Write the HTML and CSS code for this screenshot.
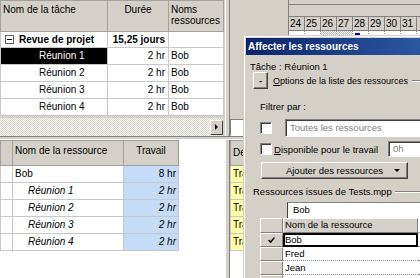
FILE: index.html
```html
<!DOCTYPE html>
<html lang="fr">

<head>
    <meta charset="UTF-8">
    <meta name="viewport" content="width=device-width, initial-scale=1.0">
    <title>Affecter les ressources</title>
    <link rel="stylesheet" href="styles.css">
</head>

<body>
    <div class="app">
        <!--volet du haut : tâches + gantt-->
        <div class="pane pane-top">
            <div class="sheet sheet-top">
                <table class="grid tasks">
                    <colgroup>
                        <col class="c-name">
                        <col class="c-dur">
                        <col class="c-res">
                    </colgroup>
                    <thead>
                        <tr>
                            <th>Nom de la tâche</th>
                            <th class="center">Durée</th>
                            <th>Noms<br>ressources</th>
                        </tr>
                    </thead>
                    <tbody>
                        <tr class="summary">
                            <td><span class="toggle"></span>Revue de projet</td>
                            <td class="num">15,25 jours</td>
                            <td></td>
                        </tr>
                        <tr class="sel">
                            <td class="task">Réunion 1</td>
                            <td class="num">2 hr</td>
                            <td>Bob</td>
                        </tr>
                        <tr>
                            <td class="task">Réunion 2</td>
                            <td class="num">2 hr</td>
                            <td>Bob</td>
                        </tr>
                        <tr>
                            <td class="task">Réunion 3</td>
                            <td class="num">2 hr</td>
                            <td>Bob</td>
                        </tr>
                        <tr>
                            <td class="task">Réunion 4</td>
                            <td class="num">2 hr</td>
                            <td>Bob</td>
                        </tr>
                    </tbody>
                </table>
                <div class="hscroll"><span class="scroll-btn"></span></div>
            </div>
            <div class="vsplit"></div>
            <div class="gantt">
                <div class="gantt-side"><span class="corner-box"></span></div>
                <div class="timescale">
                    <div class="tier tier-0"></div>
                    <div class="tier tier-1"></div>
                    <div class="days">
                        <span>24</span><span>25</span><span>26</span><span>27</span><span>28</span><span>29</span><span>30</span><span>31</span><span></span>
                    </div>
                    <div class="chart">
                        <span></span><span></span><span class="weekend"></span><span class="weekend"></span><span><i class="bar"></i></span><span></span><span></span><span></span><span></span>
                    </div>
                </div>
            </div>
        </div>
        <div class="hsplit"></div>
        <!--volet du bas : utilisation des ressources-->
        <div class="pane pane-bottom">
            <div class="sheet sheet-bottom">
                <table class="grid usage">
                    <colgroup>
                        <col class="c-id">
                        <col class="c-res-name">
                        <col class="c-work">
                    </colgroup>
                    <thead>
                        <tr>
                            <th></th>
                            <th>Nom de la ressource</th>
                            <th class="center">Travail</th>
                        </tr>
                    </thead>
                    <tbody>
                        <tr>
                            <td></td>
                            <td>Bob</td>
                            <td class="work">8 hr</td>
                        </tr>
                        <tr class="assign">
                            <td></td>
                            <td class="sub">Réunion 1</td>
                            <td class="work">2 hr</td>
                        </tr>
                        <tr class="assign">
                            <td></td>
                            <td class="sub">Réunion 2</td>
                            <td class="work">2 hr</td>
                        </tr>
                        <tr class="assign">
                            <td></td>
                            <td class="sub">Réunion 3</td>
                            <td class="work">2 hr</td>
                        </tr>
                        <tr class="assign">
                            <td></td>
                            <td class="sub">Réunion 4</td>
                            <td class="work">2 hr</td>
                        </tr>
                    </tbody>
                </table>
            </div>
            <div class="vsplit"></div>
            <div class="details">
                <table class="grid detail-grid">
                    <colgroup>
                        <col class="c-detail">
                        <col class="c-day">
                        <col class="c-day">
                    </colgroup>
                    <thead>
                        <tr><th>Détails</th><th></th><th></th></tr>
                    </thead>
                    <tbody>
                        <tr><td class="kind">Travail</td><td></td><td></td></tr>
                        <tr><td class="kind">Travail</td><td></td><td></td></tr>
                        <tr><td class="kind">Travail</td><td></td><td></td></tr>
                        <tr><td class="kind">Travail</td><td></td><td></td></tr>
                        <tr><td class="kind">Travail</td><td></td><td></td></tr>
                    </tbody>
                </table>
            </div>
        </div>

        <!--boîte de dialogue-->
        <div class="dialog">
            <div class="titlebar">Affecter les ressources</div>
            <div class="dlg-body">
                <p class="task-line">Tâche : Réunion 1</p>
                <div class="options">
                    <button class="mini">-</button>
                    <span class="options-label"><u>O</u>ptions de la liste des ressources</span>
                    <span class="rule"></span>
                </div>
                <p class="filter-label">Filtrer par :</p>
                <div class="check-row filter-row">
                    <span class="check"></span>
                    <span class="field">Toutes les ressources</span>
                </div>
                <div class="check-row avail-row">
                    <span class="check"></span>
                    <span class="check-label"><u>D</u>isponible pour le travail</span>
                    <span class="field field-small">0h</span>
                </div>
                <button class="add-btn"><span></span><span>Ajouter des ressources</span><span class="caret"></span></button>
                <div class="group">
                    <span>Ressources issues de Tests.mpp</span>
                    <span class="rule"></span>
                </div>
                <div class="editbar">
                    <span class="stub"></span>
                    <span class="edit">Bob</span>
                </div>
                <div class="res-grid">
                    <div class="res-row res-head">
                        <span class="sel-cell"></span>
                        <span class="name">Nom de la ressource</span>
                        <span class="more"></span>
                    </div>
                    <div class="res-row current">
                        <span class="sel-cell">
                            <svg width="7" height="6" viewBox="0 0 7 6"><polyline points="0.6,3 2.6,5.2 6.4,0.6" fill="none" stroke="#000" stroke-width="1.5"/></svg>
                        </span>
                        <span class="name">Bob</span>
                        <span class="more"></span>
                    </div>
                    <div class="res-row">
                        <span class="sel-cell"></span>
                        <span class="name">Fred</span>
                        <span class="more"></span>
                    </div>
                    <div class="res-row">
                        <span class="sel-cell"></span>
                        <span class="name">Jean</span>
                        <span class="more"></span>
                    </div>
                    <div class="res-row">
                        <span class="sel-cell"></span>
                        <span class="name"></span>
                        <span class="more"></span>
                    </div>
                </div>
            </div>
        </div>
    </div>
</body>

</html>
```

FILE: styles.css
```css
* {
    margin: 0;
    padding: 0;
    box-sizing: border-box
}

body {
    font-family: "Liberation Sans", Arial, sans-serif;
    font-size: 10px;
    color: #000;
    background: #fff;
}

.app {
    width: 420px;
    height: 278px;
    position: relative;
    overflow: hidden;
    background: #d4d0c8;
}

/* volets */
.pane {
    display: flex;
}

.pane-top {
    height: 136px;
}

.pane-bottom {
    height: 138px;
}

.hsplit {
    height: 4px;
    background: #d4d0c8;
    border-top: 1px solid #808080;
    border-bottom: 1px solid #fff;
}

.vsplit {
    width: 5px;
    flex: none;
    background: #d4d0c8;
    border-left: 1px solid #fff;
    border-right: 1px solid #808080;
}

.sheet {
    width: 225px;
    flex: none;
    display: flex;
    flex-direction: column;
}

.sheet-top {
    background: #d4d0c8;
}

.sheet-bottom {
    background: #fff;
}

/* tableaux */
.grid {
    border-collapse: collapse;
    table-layout: fixed;
    background: #fff;
}

.grid th {
    background: #d4d0c8;
    font-weight: normal;
    text-align: left;
    vertical-align: top;
    border: 1px solid #a0a0a0;
    padding: 3px 2px 0;
    line-height: 11px;
}

.grid th.center {
    text-align: center;
}

.grid td {
    border: 1px solid #c8c8c8;
    white-space: nowrap;
    overflow: hidden;
    padding: 0 2px;
    line-height: 12px;
}

.tasks {
    width: 223px;
}

.tasks .c-name {
    width: 107px;
}

.tasks .c-dur {
    width: 61px;
}

.tasks .c-res {
    width: 55px;
}

.tasks thead tr {
    height: 31px;
}

.tasks tbody tr {
    height: 17px;
}

.tasks tbody tr.summary {
    height: 16px;
}

.summary td {
    font-weight: bold;
}

.toggle {
    display: inline-block;
    width: 9px;
    height: 9px;
    margin: 0 5px 0 2px;
    border: 1px solid #606060;
    background: #fff;
    vertical-align: -1px;
    position: relative;
}

.toggle::after {
    content: "";
    position: absolute;
    left: 1px;
    top: 3px;
    width: 5px;
    height: 1px;
    background: #000;
}

.tasks .num {
    text-align: right;
    padding-right: 3px;
}

.tasks .task {
    padding-left: 38px;
}

.tasks .sel .task {
    background: #000;
    color: #fff;
}

.hscroll {
    margin-top: auto;
    width: 223px;
    height: 18px;
    background: repeating-conic-gradient(#fff 0 25%, #d4d0c8 0 50%) 0 0 / 2px 2px;
    display: flex;
    justify-content: flex-end;
    align-items: center;
}

.scroll-btn {
    width: 13px;
    height: 15px;
    background: #d4d0c8;
    border: 1px solid;
    border-color: #fff #404040 #404040 #fff;
    display: flex;
    align-items: center;
    justify-content: center;
}

.scroll-btn::after {
    content: "";
    border-left: 3px solid #000;
    border-top: 3px solid transparent;
    border-bottom: 3px solid transparent;
}

/* gantt */
.gantt {
    flex: 1;
    display: flex;
}

.gantt-side {
    width: 58px;
    flex: none;
    display: flex;
    flex-direction: column;
    justify-content: flex-end;
}

.corner-box {
    width: 15px;
    height: 17px;
    background: #fff;
    border: 1px solid;
    border-color: #808080 #fff #fff #808080;
}

.timescale {
    flex: 1;
    display: flex;
    flex-direction: column;
    background: #fff;
    border-left: 1px solid #808080;
}

.tier {
    background: #d4d0c8;
    border-bottom: 1px solid #808080;
}

.tier-0 {
    height: 5px;
}

.tier-1 {
    height: 12px;
}

.days {
    display: flex;
    height: 14px;
    background: #d4d0c8;
    border-bottom: 1px solid #808080;
}

.days span {
    width: 16px;
    flex: none;
    border-right: 1px solid #808080;
    padding-left: 1px;
    line-height: 13px;
}

.chart {
    flex: 1;
    display: flex;
}

.chart span {
    width: 16px;
    flex: none;
    border-right: 1px dotted #808080;
}

.chart .weekend {
    background: repeating-conic-gradient(#c0c0c0 0 25%, #fff 0 50%) 0 0 / 2px 2px;
}

.chart .bar {
    display: block;
    width: 5px;
    height: 2px;
    margin: 2px 0 0 2px;
    background: #0000c0;
}

/* utilisation */
.usage {
    width: 178px;
}

.usage .c-id {
    width: 12px;
}

.usage .c-res-name {
    width: 111px;
}

.usage .c-work {
    width: 55px;
}

.usage thead tr {
    height: 25px;
}

.usage th {
    padding-top: 4px;
}

.usage tbody tr {
    height: 17px;
}

.usage .work {
    background: #c4dcf8;
    text-align: right;
    padding-right: 2px;
}

.usage .assign td {
    font-style: italic;
}

.usage .sub {
    padding-left: 15px;
}

.details {
    flex: 1;
    background: #fff;
    overflow: hidden;
}

.detail-grid {
    width: 154px;
}

.detail-grid .c-detail {
    width: 14px;
}

.detail-grid .c-day {
    width: 70px;
}

.detail-grid thead tr {
    height: 25px;
}

.detail-grid th {
    padding: 6px 0 0 2px;
    overflow: hidden;
    white-space: nowrap;
}

.detail-grid tbody tr {
    height: 17px;
}

.detail-grid .kind {
    background: #ffffa8;
    padding: 0 0 0 2px;
}

/* boîte de dialogue */
.dialog {
    position: absolute;
    left: 243px;
    top: 35px;
    width: 190px;
    height: 250px;
    padding: 2px;
    background: #d4d0c8;
    border: 1px solid;
    border-color: #d4d0c8 #404040 #404040 #d4d0c8;
    box-shadow: inset 1px 1px #fff;
    font-size: 9.5px;
}

.titlebar {
    height: 17px;
    padding-left: 2px;
    background: linear-gradient(to right, #0a246a, #2d5aa4);
    color: #fff;
    font-weight: bold;
    font-size: 10px;
    line-height: 17px;
    white-space: nowrap;
}

.dlg-body {
    padding-top: 6px;
}

.task-line {
    margin-left: 4px;
    line-height: 11px;
}

.options {
    display: flex;
    align-items: center;
    height: 17px;
    margin-left: 7px;
}

button {
    font: inherit;
    color: #000;
    background: #d4d0c8;
}

.mini {
    width: 15px;
    height: 17px;
    flex: none;
    border: 1px solid;
    border-color: #fff #404040 #404040 #fff;
    box-shadow: inset -1px -1px #808080;
    line-height: 13px;
    font-weight: bold;
}

.options-label {
    margin-left: 5px;
    font-size: 9px;
    white-space: nowrap;
}

.rule {
    flex: 1;
    height: 2px;
    margin-left: 4px;
    border-top: 1px solid #808080;
    border-bottom: 1px solid #fff;
}

.filter-label {
    margin: 12px 0 0 14px;
    line-height: 11px;
}

.check-row {
    display: flex;
    align-items: center;
    padding-left: 14px;
}

.filter-row {
    height: 18px;
    margin-top: 7px;
}

.avail-row {
    height: 16px;
    margin-top: 4px;
}

.check {
    width: 12px;
    height: 12px;
    flex: none;
    background: #fff;
    border: 1px solid;
    border-color: #808080 #fff #fff #808080;
    box-shadow: inset 1px 1px #404040;
}

.field {
    flex: 1;
    height: 100%;
    margin-left: 13px;
    padding-left: 4px;
    background: #fff;
    border: 1px solid;
    border-color: #808080 #fff #fff #808080;
    box-shadow: inset 1px 1px #404040;
    color: #808080;
    line-height: 15px;
    white-space: nowrap;
}

.check-label {
    margin-left: 2px;
    white-space: nowrap;
}

.field-small {
    flex: none;
    width: 42px;
    margin-left: auto;
    line-height: 13px;
}

.add-btn {
    display: grid;
    grid-template-columns: 1fr auto 1fr;
    align-items: center;
    width: 147px;
    height: 17px;
    margin: 5px 0 0 15px;
    border: 1px solid;
    border-color: #fff #404040 #404040 #fff;
    box-shadow: inset -1px -1px #808080;
    white-space: nowrap;
}

.caret {
    justify-self: end;
    margin-right: 7px;
    border-top: 3px solid #000;
    border-left: 3px solid transparent;
    border-right: 3px solid transparent;
}

.group {
    display: flex;
    align-items: center;
    margin: 7px 0 0 7px;
    line-height: 11px;
    white-space: nowrap;
}

.group .rule {
    margin-left: 3px;
}

.editbar {
    display: flex;
    height: 16px;
    margin: 5px 0 0 14px;
}

.stub {
    width: 27px;
    flex: none;
}

.edit {
    flex: 1;
    padding-left: 5px;
    background: #fff;
    border-left: 1px solid #404040;
    border-top: 1px solid #808080;
    line-height: 14px;
}

.res-grid {
    margin-left: 14px;
}

.res-row {
    display: flex;
    height: 14px;
}

.res-head {
    height: 15px;
}

.sel-cell {
    width: 23px;
    flex: none;
    display: flex;
    align-items: center;
    justify-content: center;
    background: #d4d0c8;
    border: 1px solid;
    border-color: #fff #808080 #808080 #fff;
}

.name {
    width: 135px;
    flex: none;
    padding-left: 2px;
    background: #fff;
    border-bottom: 1px dotted #909090;
    line-height: 13px;
    white-space: nowrap;
}

.res-head .name {
    background: #d4d0c8;
    border: 1px solid;
    border-color: #fff #808080 #808080 #fff;
    padding-left: 1px;
    line-height: 12px;
}

.current .name {
    border: 2px solid #000;
    padding-left: 0;
    line-height: 10px;
}

.more {
    flex: 1;
    background: #fff;
    border-bottom: 1px dotted #909090;
}
```
